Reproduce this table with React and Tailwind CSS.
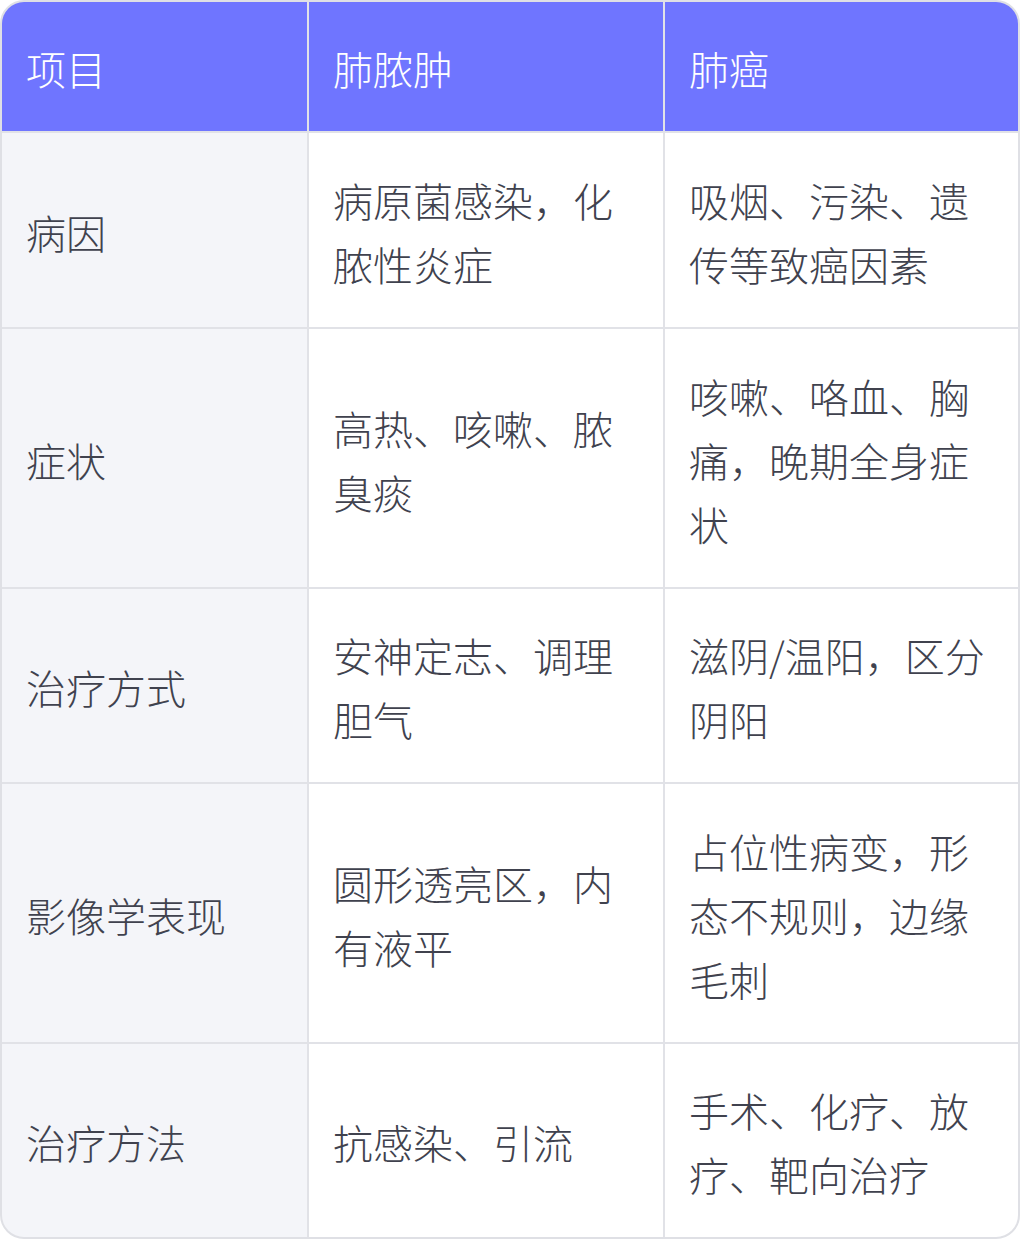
import React from "react";

const rows = [
  { h: "h-[194px]", a: "病因", b: "病原菌感染，化脓性炎症", c: "吸烟、污染、遗传等致癌因素" },
  { h: "h-[258px]", a: "症状", b: "高热、咳嗽、脓臭痰", c: "咳嗽、咯血、胸痛，晚期全身症状" },
  { h: "h-[193px]", a: "治疗方式", b: "安神定志、调理胆气", c: "滋阴/温阳，区分阴阳" },
  { h: "h-[258px]", a: "影像学表现", b: "圆形透亮区，内有液平", c: "占位性病变，形态不规则，边缘毛刺" },
  { h: "h-[193px]", a: "治疗方法", b: "抗感染、引流", c: "手术、化疗、放疗、靶向治疗" },
];

const font = { fontFamily: '"Noto Sans CJK SC", "Noto Sans", sans-serif' };

export default function App() {
  return (
    <div className="w-[1020px] h-[1239px] bg-white" style={font}>
      <div className="w-[1020px] h-[1239px] rounded-[24px] border-2 border-[#dfe0e5] overflow-hidden bg-[#e1e2e7]">
        <div className="grid grid-cols-[305px_354px_353px] gap-[2px] text-[40px] leading-[64px] font-light">
          {["项目", "肺脓肿", "肺癌"].map((t) => (
            <div key={t} className="h-[129px] bg-[#6f75ff] text-white pl-[24px] pr-[25px] pt-[3px] flex items-center">
              {t}
            </div>
          ))}
          {rows.map((r) => (
            <React.Fragment key={r.a}>
              <div className={`${r.h} bg-[#f4f5f9] text-[#40424e] pl-[24px] pr-[25px] pt-[3px] flex items-center`}>
                {r.a}
              </div>
              <div className={`${r.h} bg-white text-[#40424e] pl-[24px] pr-[25px] pt-[3px] flex items-center`}>
                <span>{r.b}</span>
              </div>
              <div className={`${r.h} bg-white text-[#40424e] pl-[24px] pr-[25px] pt-[3px] flex items-center`}>
                <span>{r.c}</span>
              </div>
            </React.Fragment>
          ))}
        </div>
      </div>
    </div>
  );
}
